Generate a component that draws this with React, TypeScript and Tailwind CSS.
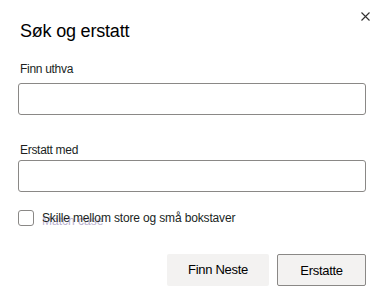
export default function App() {
  return (
    <div
      className="relative w-[381px] h-[293px] bg-white overflow-hidden text-[#201f1e]"
      style={{ fontFamily: '"Liberation Sans", Arial, sans-serif' }}
    >
      <button className="absolute right-[11px] top-[11px] w-[10px] h-[10px] flex items-center justify-center text-[#323130]">
        <svg width="9" height="9" viewBox="0 0 9 9">
          <path d="M0.5 0.5 L8.5 8.5 M8.5 0.5 L0.5 8.5" stroke="currentColor" strokeWidth="1.1" />
        </svg>
      </button>

      <div className="flex flex-col pl-[18px] pr-[15px]">
        <h1 className="mt-[20px] ml-[2px] text-[18px] leading-[22px] tracking-[-0.2px] text-black">Søk og erstatt</h1>

        <label className="mt-[19px] ml-[2px] text-[12px] leading-[16px] tracking-[-0.3px]">Finn uthva</label>
        <input className="mt-[6px] h-[32px] w-[348px] rounded-[3px] border border-[#8a8886] outline-none" />

        <label className="mt-[27px] ml-[2px] text-[12px] leading-[16px] tracking-[-0.3px]">Erstatt med</label>
        <input className="mt-[2px] h-[32px] w-[348px] rounded-[3px] border border-[#8a8886] outline-none" />

        <div className="mt-[18px] flex items-center">
          <span className="w-[16px] h-[16px] rounded-[3px] border border-[#8a8886] bg-white" />
          <span className="relative ml-[8px] text-[12px] leading-[16px] tracking-[-0.15px]">
            <span className="absolute left-0 top-[3px] text-[#b9b3cf] tracking-[0px]">Match case</span>
            <span className="relative">Skille mellom store og små bokstaver</span>
          </span>
        </div>

        <div className="mt-[28px] flex justify-end gap-[8px]">
          <button className="w-[102px] h-[32px] rounded-[2px] bg-[#f3f2f1] text-[13px] tracking-[-0.3px] text-black">
            Finn Neste
          </button>
          <button className="w-[89px] h-[32px] rounded-[2px] border border-[#8a8886] bg-[#f3f2f1] text-[13px] pt-[2px] tracking-[-0.3px] text-black">
            Erstatte
          </button>
        </div>
      </div>
    </div>
  );
}
